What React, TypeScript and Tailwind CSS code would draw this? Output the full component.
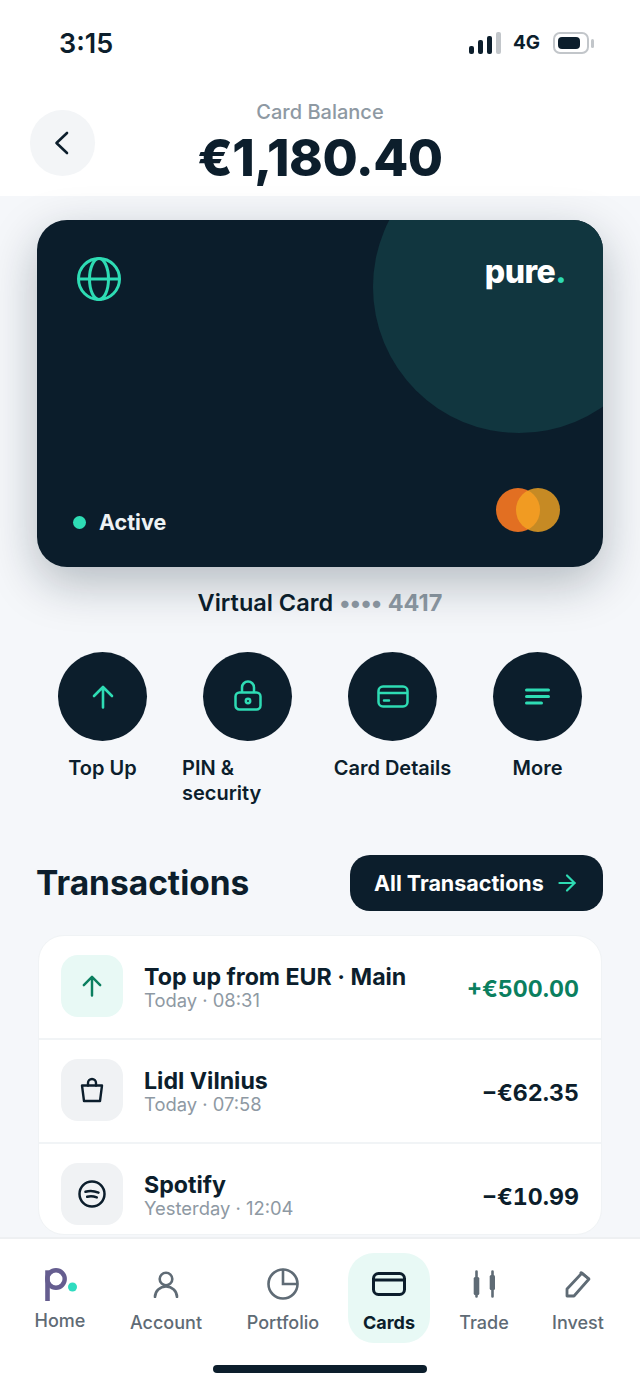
import { ArrowRight } from "lucide-react";
import type { ReactNode } from "react";

const MINT = "#2edcb4";
const NAVY = "#0c1e2c";

function UpArrow({ color, w, h, stroke }: { color: string; w: number; h: number; stroke: number }) {
	return (
		<svg width={w} height={h} viewBox="0 0 22 24" fill="none" stroke={color} strokeWidth={stroke} strokeLinecap="round" strokeLinejoin="round">
			<path d="M11 22.5V2M2 11l9-9 9 9" />
		</svg>
	);
}

function ActionIcon({ label, wide, children }: { label: ReactNode; wide?: boolean; children: ReactNode }) {
	return (
		<div className="w-[145px] flex flex-col items-center">
			<div className="w-[89px] h-[89px] rounded-full bg-[#0c1e2c] flex items-center justify-center">
				{children}
			</div>
			<div className={`mt-[15px] text-[20px] leading-[25px] font-semibold text-[#0c1e2c] ${wide ? "w-[131px] text-left" : "text-center whitespace-nowrap"}`}>
				{label}
			</div>
		</div>
	);
}

function TxRow({ icon, tint, title, sub, amount, green, last }: { icon: ReactNode; tint: string; title: string; sub: string; amount: string; green?: boolean; last?: boolean }) {
	return (
		<div className={`h-[104px] pl-[22px] pr-[22px] pt-[19px] flex items-start ${last ? "" : "border-b-2 border-[#f1f4f6]"}`}>
			<div className={`w-[62px] h-[62px] rounded-[17px] flex items-center justify-center ${tint}`}>{icon}</div>
			<div className="ml-[21px] flex-1">
				<div className="text-[23.2px] leading-[30px] font-bold text-[#0c1e2c] whitespace-nowrap mt-[7px]">{title}</div>
				<div className="text-[18.4px] leading-[22px] text-[#8e99a3] whitespace-nowrap -mt-[3px]">{sub}</div>
			</div>
			<div className={`text-[23.2px] leading-[30px] font-bold tabular-nums mt-[19px] ${green ? "text-[#0b7f5f]" : "text-[#0c1e2c]"}`}>{amount}</div>
		</div>
	);
}

function NavItem({ width, label, active, home, children }: { width: string; label: string; active?: boolean; home?: boolean; children: ReactNode }) {
	return (
		<div className={`${width} h-[90px] flex flex-col items-center pt-[12px] ${active ? "bg-[#e8f9f5] rounded-[26px]" : ""}`}>
			<div className="h-[38px] flex items-center justify-center">{children}</div>
			<div className={`${home ? "mt-[6px]" : "mt-[8px]"} text-[18px] leading-[24px] whitespace-nowrap ${active ? "font-bold text-[#0c1e2c]" : "font-medium text-[#5f6b75]"}`}>{label}</div>
		</div>
	);
}

export default function App() {
	return (
		<div className="w-[640px] h-[1386px] overflow-hidden bg-[#f5f7fa] font-['Inter',sans-serif] flex flex-col">
			{/* header */}
			<header className="h-[196px] bg-white shrink-0">
				<div className="h-[87px] pl-[59px] pr-[46px] pt-[28px] flex items-start justify-between">
					<span className="text-[27px] leading-[31px] font-semibold text-[#0c1e2c]">3:15</span>
					<div className="flex items-center pt-[4px]">
						<div className="flex items-end gap-[4px] h-[22px]">
							<div className="w-[5px] h-[8px] rounded-[2px] bg-[#0c1e2c]" />
							<div className="w-[5px] h-[14px] rounded-[2px] bg-[#0c1e2c]" />
							<div className="w-[5px] h-[18px] rounded-[2px] bg-[#0c1e2c]" />
							<div className="w-[5px] h-[22px] rounded-[2px] bg-[#c2c6ca]" />
						</div>
						<span className="ml-[12px] text-[19px] leading-[22px] font-bold text-[#0c1e2c]">4G</span>
						<div className="ml-[13px] w-[36px] h-[22px] rounded-[7px] border-2 border-[#c2c6ca] p-[3px] flex">
							<div className="w-[22px] rounded-[4px] bg-[#0c1e2c]" />
						</div>
						<div className="ml-[2px] w-[3px] h-[9px] rounded-[2px] bg-[#c2c6ca]" />
					</div>
				</div>
				<div className="relative flex flex-col items-center mt-[12px]">
					<div className="absolute left-[30px] top-[11px] w-[65px] h-[66px] rounded-full bg-[#f3f5f7] flex items-center justify-center">
						<svg width="15" height="24" viewBox="0 0 15 24" fill="none" stroke={NAVY} strokeWidth="2.6" strokeLinecap="round" strokeLinejoin="round" className="-ml-[2px]">
							<path d="M13 2L2.5 12 13 22" />
						</svg>
					</div>
					<div className="text-[20px] leading-[26px] font-medium text-[#8e99a3]">Card Balance</div>
					<div className="text-[51px] leading-[58px] font-extrabold text-[#0c1e2c] mt-[4px] tracking-[-0.5px]">€1,180.40</div>
				</div>
			</header>

			{/* card */}
			<section className="mt-[24px] mx-[37px] h-[347px] shrink-0 rounded-[30px] bg-[#0b1d2b] relative overflow-hidden shadow-[0_16px_48px_rgba(12,30,44,0.28)]">
				<div className="absolute left-[336px] -top-[79px] w-[292px] h-[292px] rounded-full bg-[#11363f]" />
				<div className="relative h-full pl-[36px] pr-[37px] pt-[33px] pb-[34px] flex flex-col justify-between">
					<div className="flex items-start justify-between">
						<svg width="46" height="46" viewBox="0 0 46 46" fill="none" stroke={MINT} strokeWidth="3" className="ml-[3px] mt-[3px]">
							<circle cx="23" cy="23" r="20.5" />
							<ellipse cx="23" cy="23" rx="9.5" ry="20.5" />
							<path d="M2.5 23h41" />
						</svg>
						<div className="text-[32px] leading-[40px] font-extrabold text-white tracking-[-0.5px] -mt-[1px]">
							pure<span className="text-[#2edcb4]">.</span>
						</div>
					</div>
					<div className="flex items-end justify-between">
						<div className="flex items-center -mb-[3px]">
							<div className="w-[13px] h-[13px] rounded-full bg-[#2edcb4]" />
							<span className="ml-[13px] text-[21.5px] leading-[28px] font-bold text-[#eef2f4]">Active</span>
						</div>
						<div className="flex mr-[6px] mb-[1px]">
							<div className="w-[44px] h-[44px] rounded-full bg-[#e26f22]" />
							<div className="w-[44px] h-[44px] rounded-full bg-[#f5a623]/80 -ml-[24px]" />
						</div>
					</div>
				</div>
			</section>

			<div className="mt-[21px] h-[30px] flex items-center justify-center text-[23.5px] font-semibold text-[#0c1e2c]">
				Virtual Card
				<span className="ml-[6px] text-[#8e99a3] font-bold flex items-center">
					<span className="tracking-[-0.5px]">••••</span>
					<span className="ml-[6px]">4417</span>
				</span>
			</div>

			{/* actions */}
			<section className="mt-[34px] pl-[30px] flex h-[157px] shrink-0">
				<ActionIcon label="Top Up">
					<UpArrow color={MINT} w={22} h={24} stroke={2.6} />
				</ActionIcon>
				<ActionIcon label={<>PIN &amp;<br />security</>} wide>
					<svg width="28" height="31" viewBox="0 0 28 31" fill="none" stroke={MINT} strokeWidth="2.5" className="-mt-[2px]">
						<rect x="1.5" y="12.5" width="25" height="17" rx="4" />
						<path d="M8 12.5V7.5a6 6 0 0 1 12 0v5" />
						<circle cx="14" cy="21" r="2.2" />
					</svg>
				</ActionIcon>
				<ActionIcon label="Card Details">
					<svg width="32" height="23" viewBox="0 0 32 23" fill="none" stroke={MINT} strokeWidth="2.5" strokeLinecap="round">
						<rect x="1.5" y="1.5" width="29" height="20" rx="4.5" />
						<path d="M2 8h28M7 15.5h5" />
					</svg>
				</ActionIcon>
				<ActionIcon label="More">
					<svg width="25" height="17" viewBox="0 0 25 17" fill="none" stroke={MINT} strokeWidth="3" strokeLinecap="round">
						<path d="M1.5 2h22M1.5 8.5h22M1.5 15h15" />
					</svg>
				</ActionIcon>
			</section>

			{/* transactions */}
			<section className="mt-[46px] pl-[37px] pr-[37px] flex items-center justify-between shrink-0">
				<h2 className="text-[33.5px] leading-[56px] font-bold text-[#0c1e2c] -ml-[1px]">Transactions</h2>
				<div className="w-[253px] h-[56px] rounded-[20px] bg-[#0c1e2c] pl-[24px] flex items-center">
					<span className="text-[21.5px] font-bold text-white whitespace-nowrap">All Transactions</span>
					<ArrowRight size={26} strokeWidth={2} color={MINT} className="ml-[10px]" />
				</div>
			</section>

			<section className="mt-[24px] mx-[38px] h-[300px] shrink-0 rounded-[26px] bg-white overflow-hidden border border-[#f0f3f5]">
				<TxRow
					icon={<UpArrow color="#0b7f5f" w={20} h={22} stroke={2.7} />}
					tint="bg-[#e8f9f5]"
					title="Top up from EUR · Main"
					sub="Today · 08:31"
					amount="+€500.00"
					green
				/>
				<TxRow
					icon={
						<svg width="24" height="26" viewBox="0 0 24 26" fill="none" stroke={NAVY} strokeWidth="2.4" strokeLinejoin="round" strokeLinecap="round">
							<path d="M2 8.5h20l-2 15.5H4L2 8.5z" />
							<path d="M8 8.5V6a4 4 0 0 1 8 0v2.5" />
						</svg>
					}
					tint="bg-[#f0f2f4]"
					title="Lidl Vilnius"
					sub="Today · 07:58"
					amount="−€62.35"
				/>
				<TxRow
					icon={
						<svg width="28" height="28" viewBox="0 0 28 28" fill="none" stroke={NAVY} strokeWidth="2.5" strokeLinecap="round">
							<circle cx="14" cy="14" r="12.5" />
							<path d="M7.5 11.8c4-1.4 8.5-1.1 13 .8M9.2 16.8c3-1 6-.8 9.6.6" />
						</svg>
					}
					tint="bg-[#f0f2f4]"
					title="Spotify"
					sub="Yesterday · 12:04"
					amount="−€10.99"
					last
				/>
			</section>

			{/* bottom nav */}
			<nav className="mt-[2px] flex-1 bg-white border-t-2 border-[#eef0f2] relative">
				<div className="pl-[18px] pt-[14px] flex">
					<NavItem width="w-[84px]" label="Home" home>
						<svg width="32" height="33" viewBox="0 0 32 33" className="ml-[2px]">
							<path d="M2.5 33V2.3" fill="none" stroke="#655d8f" strokeWidth="4.6" />
							<circle cx="11" cy="11" r="8.7" fill="none" stroke="#655d8f" strokeWidth="4.4" />
							<circle cx="27.5" cy="19" r="4.5" fill="#2fdcc0" />
						</svg>
					</NavItem>
					<NavItem width="w-[128px]" label="Account">
						<svg width="26" height="27" viewBox="0 0 26 27" fill="none" stroke="#5f6b75" strokeWidth="2.6" strokeLinecap="round">
							<circle cx="13" cy="8" r="6.3" />
							<path d="M2 26c0-6 5-10.5 11-10.5S24 20 24 26" />
						</svg>
					</NavItem>
					<NavItem width="w-[106px]" label="Portfolio">
						<svg width="32" height="32" viewBox="0 0 32 32" fill="none" stroke="#5f6b75" strokeWidth="2.6" strokeLinecap="round">
							<circle cx="16" cy="16" r="14.5" />
							<path d="M16 2v14h14" />
						</svg>
					</NavItem>
					<div className="w-[12px] shrink-0" />
					<NavItem width="w-[82px]" label="Cards" active>
						<svg width="34" height="24" viewBox="0 0 34 24" fill="none" stroke={NAVY} strokeWidth="3">
							<rect x="1.5" y="1.5" width="31" height="21" rx="5" />
							<path d="M2 8h30" />
						</svg>
					</NavItem>
					<NavItem width="w-[108px]" label="Trade">
						<svg width="22" height="28" viewBox="0 0 22 28" fill="#5f6b75" stroke="#5f6b75" strokeWidth="2.6" strokeLinecap="round">
							<path d="M3.5 1.5v25M19.5 1.5v25" />
							<rect x="0.7" y="7" width="5.6" height="18" rx="1.5" stroke="none" />
							<rect x="16.7" y="5" width="5.3" height="15" rx="1.5" stroke="none" />
						</svg>
					</NavItem>
					<NavItem width="w-[80px]" label="Invest">
						<svg width="26" height="28" viewBox="0 0 26 28" fill="none" stroke="#5f6b75" strokeWidth="2.8" strokeLinejoin="round">
							<path d="M2 26v-7L17 3l7 6L9 26H2z" />
							<path d="M15 2l9 7" />
						</svg>
					</NavItem>
				</div>
				<div className="absolute left-[213px] top-[126px] w-[214px] h-[8px] rounded-full bg-[#0c1e2c]" />
			</nav>
		</div>
	);
}
